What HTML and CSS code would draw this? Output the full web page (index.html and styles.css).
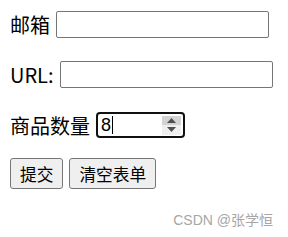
FILE: index.html
```html
<!DOCTYPE html>
<html lang="zh-CN">
<head>
    <meta charset="UTF-8">
    <meta name="viewport" content="width=device-width, initial-scale=1.0">
    <title>表单</title>
    <link rel="stylesheet" href="styles.css">
</head>
<body>
    <form class="form">
        <div class="row row-email">
            <label for="email">邮箱</label>
            <input class="text-input" id="email" type="text">
        </div>
        <div class="row row-url">
            <label for="url">URL:</label>
            <input class="text-input" id="url" type="text">
        </div>
        <div class="row row-count">
            <label>商品数量</label>
            <div class="number-box">
                <span class="number-value">8</span><span class="caret"></span>
                <span class="spinner">
                    <span class="spin-up">
                        <svg width="9" height="5" viewBox="0 0 9 5"><path d="M0 5 L4.5 0 L9 5 Z" fill="#505050"/></svg>
                    </span>
                    <span class="spin-down">
                        <svg width="9" height="5" viewBox="0 0 9 5"><path d="M0 0 L4.5 5 L9 0 Z" fill="#505050"/></svg>
                    </span>
                </span>
            </div>
        </div>
        <div class="row buttons">
            <button type="submit" class="btn">提交</button>
            <button type="reset" class="btn">清空表单</button>
        </div>
    </form>
    <div class="watermark">CSDN @张学恒</div>
</body>
</html>
```

FILE: styles.css
```css
* {
    margin: 0;
    padding: 0;
    box-sizing: border-box;
}

body {
    background: #fff;
    color: #000;
    font-family: "Noto Sans CJK SC", "Noto Sans", sans-serif;
    padding: 11px 0 0 10px;
}

.form {
    display: flex;
    flex-direction: column;
}

.row {
    display: flex;
    align-items: center;
    gap: 6px;
    font-size: 20px;
    height: 27px;
}

.row label {
    line-height: 27px;
}

.row-email {
    margin-bottom: 23px;
}

.row-url {
    margin-bottom: 24px;
}

.row-count {
    height: 26px;
    margin-bottom: 20px;
}

.text-input {
    width: 213px;
    height: 27px;
    border: 1px solid #767676;
    border-radius: 2px;
    background: #fff;
    font-size: 17px;
    outline: none;
}

.number-box {
    display: flex;
    align-items: center;
    width: 89px;
    height: 26px;
    border: 2px solid #101010;
    border-radius: 4px;
    padding-left: 3px;
    font-family: "Liberation Sans", sans-serif;
    font-size: 18px;
}

.caret {
    display: inline-block;
    width: 1px;
    height: 18px;
    background: #000;
    margin-left: 1px;
}

.spinner {
    margin-left: auto;
    margin-right: 2px;
    display: flex;
    flex-direction: column;
    width: 19px;
    height: 19px;
}

.spin-up, .spin-down {
    flex: 1;
    display: flex;
    align-items: center;
    justify-content: center;
}

.spin-up {
    background: #d3d3d3;
}

.spin-down {
    background: #efefef;
}

.buttons {
    height: 31px;
    gap: 6px;
}

.btn {
    height: 31px;
    padding: 0 9px;
    border: 1px solid #767676;
    border-radius: 3px;
    background: #efefef;
    color: #000;
    font-family: "Noto Sans CJK SC", sans-serif;
    font-size: 16.7px;
}

.watermark {
    text-align: right;
    padding-right: 15px;
    margin-top: 20px;
    font-family: "Liberation Sans", "Noto Sans CJK SC", sans-serif;
    font-size: 14px;
    color: #a6a6a6;
}
```
